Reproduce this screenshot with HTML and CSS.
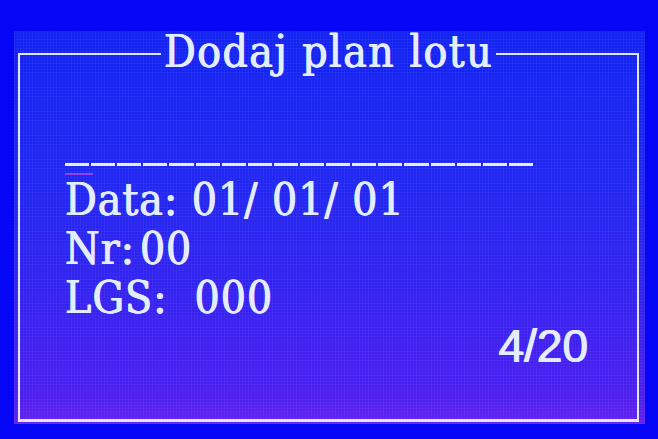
FILE: index.html
```html
<!DOCTYPE html>
<html lang="pl">
<head>
<meta charset="utf-8">
<title>Dodaj plan lotu</title>
<link rel="stylesheet" href="styles.css">
</head>
<body>
<div class="screen">
  <fieldset class="frame">
    <legend class="title">Dodaj plan lotu</legend>
    <div class="content">
      <div class="dashes" aria-label="_________________"></div>
      <div class="cursor"></div>
      <div class="line">Data: 01/ 01/ 01</div>
      <div class="line">Nr:&#8202;00</div>
      <div class="line">LGS:&nbsp; 000</div>
      <div class="page">4/20</div>
    </div>
  </fieldset>
</div>
</body>
</html>
```
FILE: styles.css
```css
html, body {
  margin: 0;
  padding: 0;
}
body {
  width: 658px;
  height: 439px;
  overflow: hidden;
  background: #0606f6;
  font-family: "DejaVu Serif Condensed", "DejaVu Serif", serif;
  font-stretch: condensed;
  color: #e4ecff;
}
.screen {
  margin: 31px 0 0 14px;
  width: 631px;
  padding: 0 6px 2px 4px;
  box-sizing: border-box;
  background:
    repeating-linear-gradient(90deg, rgba(255,255,255,0.04) 0 1px, transparent 1px 3px),
    repeating-linear-gradient(0deg, rgba(255,255,255,0.04) 0 1px, transparent 1px 3px),
    linear-gradient(180deg, #1222f2 0%, #1e26f2 35%, #3222f0 65%, #4a1ef0 92%, #6420ee 100%);
}
.frame {
  margin: 0;
  padding: 0;
  min-width: 0;
  height: 391px;
  box-sizing: border-box;
  border: 2px solid #dfe7ff;
  border-bottom-width: 3px;
}
.title {
  margin: 0 auto;
  padding: 0 3px 4px;
  font-size: 44px;
  line-height: 42px;
  letter-spacing: 1.5px;
  text-shadow: 0.6px 0 0 #e4ecff, -0.4px 0 0 #e4ecff;
}
.content {
  padding: 86px 0 0 45px;
  display: flex;
  flex-direction: column;
}
.dashes {
  width: 470px;
  height: 3px;
  background: repeating-linear-gradient(90deg, #e4ecff 0 24.1px, transparent 24.1px 26.11px);
}
.cursor {
  width: 28px;
  height: 2px;
  margin-top: 7px;
  background: #b048e8;
  opacity: 0.8;
}
.line {
  font-size: 44px;
  line-height: 49px;
  letter-spacing: 1px;
  white-space: pre;
  text-shadow: 0.6px 0 0 #e4ecff, -0.4px 0 0 #e4ecff;
}
.page {
  align-self: flex-end;
  margin: 1px 49px 0 0;
  font-family: "Liberation Sans", Arial, sans-serif;
  font-stretch: normal;
  font-size: 46px;
  line-height: 46px;
  text-shadow: 0.7px 0 0 #e4ecff, -0.5px 0 0 #e4ecff;
}
```
